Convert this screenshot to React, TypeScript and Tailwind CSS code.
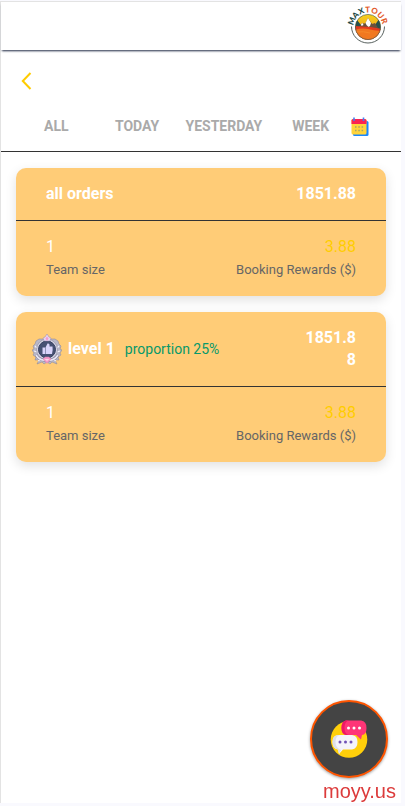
import type { ReactNode } from 'react';

const logoLetters = [
  { letter: 'M', angle: -70, fill: '#1d4843' },
  { letter: 'A', angle: -46, fill: '#1d4843' },
  { letter: 'X', angle: -23, fill: '#1d4843' },
  { letter: 'T', angle: -1, fill: '#e35b2b' },
  { letter: 'O', angle: 22, fill: '#e35b2b' },
  { letter: 'U', angle: 47, fill: '#e35b2b' },
  { letter: 'R', angle: 70, fill: '#e35b2b' },
];

function Logo() {
  return (
    <svg viewBox="0 1 40 40" className="h-10 w-10 overflow-visible" role="img" aria-label="MAXTOUR">
      <defs>
        <clipPath id="disc">
          <circle cx="20" cy="22" r="12.6" />
        </clipPath>
        <linearGradient id="sun" x1="0" y1="0" x2="0" y2="1">
          <stop offset="0" stopColor="#f6d21c" />
          <stop offset="1" stopColor="#f08a1d" />
        </linearGradient>
      </defs>
      <g clipPath="url(#disc)">
        <rect x="7" y="9" width="26" height="26" fill="url(#sun)" />
        <path d="M6 22 V14 L9 15 L13 20 L18 18 L22 18 L27 20 L31 14 L34 15 V25 H6Z" fill="#27504b" />
        <path d="M11 22 L14 18 L17 19 L20 13 L24 19 L27 18 L30 23Z" fill="#69503d" />
        <path d="M17.500 18 L20 13 L23 18 L22 21 L20.500 22 L18.500 20Z M13 19 L14.500 18 L15.500 20 L13.500 21Z" fill="#fff" />
        <path d="M6 21 L14 21.500 L23 22 L34 24 V36 H6Z" fill="#e33a1e" />
        <path d="M6 25 Q14 22.500 20 24 T34 26 V36 H6Z" fill="#f17820" />
        <path d="M8 27 Q16 26 22 28" stroke="#f5892a" fill="none" strokeWidth="1" />
      </g>
      <circle cx="20" cy="22" r="12.600" fill="none" stroke="#40534e" strokeWidth=".6" />
      <path d="M3.500 21.500 A16.500 16.500 0 1 0 36.500 21.500" fill="none" stroke="#59625f" strokeWidth="1" />
      {logoLetters.map(({ letter, angle, fill }) => (
        <text
          key={letter}
          x="20"
          y="7.500"
          transform={`rotate(${angle} 20 22)`}
          textAnchor="middle"
          fontFamily="Lato, Roboto, sans-serif"
          fontSize="8"
          fontWeight="900"
          fill={fill}
        >
          {letter}
        </text>
      ))}
    </svg>
  );
}

function CalendarIcon() {
  return (
    <svg viewBox="0 0 18 20" className="h-5 w-[18px]" aria-hidden="true">
      <rect x="2" y="4" width="15.5" height="15" rx="1.5" fill="#1687ff" />
      <rect x="0.5" y="2" width="15" height="15.5" rx="1.5" fill="#ffd43b" />
      <path d="M.5 7V3.5Q.5 2 2 2H14Q15.500 2 15.500 3.500V7Z" fill="#fa2353" />
      <path d="M3 .5V4M12.500 .5V4" stroke="#477cf0" strokeWidth="1.600" />
      <path d="M4 10H5.500M7.300 10H8.800M10.600 10H12.100M4 13.500H5.500M7.300 13.500H8.800M10.600 13.500H12.100" stroke="#a2a36c" strokeWidth="1.500" />
    </svg>
  );
}

function Medal() {
  return (
    <svg viewBox="0 0 30 31" className="h-[31px] w-[30px] shrink-0" aria-hidden="true">
      <path d="M7 5L4 7L3 10L1 12L2 15L0 16L2 19L1 21L4 23L3 26L7 26L5 30L10 28L12 30L15 28L18 30L20 28L25 30L23 26L27 26L26 23L29 21L28 19L30 16L28 15L29 12L27 10L26 7L23 5Z" fill="#b9b8c8" stroke="#86839a" strokeWidth=".5" />
      <path d="M3 12L5 14M2 17L5 18M4 22L7 22M27 12L25 14M28 17L25 18M26 22L23 22M6 27L10 25M24 27L20 25" stroke="#f3f2fb" strokeWidth="1.300" />
      <circle cx="15" cy="15.500" r="10.500" fill="#d5d4e4" stroke="#8b899f" strokeWidth=".6" />
      <circle cx="15" cy="15.500" r="8.500" fill="#465173" stroke="#363f60" />
      <path d="M10.500 13.500H13V20H10.500Z M13.500 13.500L15.500 9.500Q18 9 17.500 12.500H20.500Q21 15 20 20H13.500Z" fill="#d9d4fa" />
      <path d="M4 21Q8 27 14 26M26 21Q22 27 16 26" fill="none" stroke="#77758c" strokeWidth="2.600" />
      <path d="M4 21Q8 27 14 26M26 21Q22 27 16 26" fill="none" stroke="#e8e6f6" strokeWidth="1.800" />
      <path d="M15 0L17 3L19 4L18 7H12L11 4L13 3Z" fill="#e6d5f1" stroke="#9688ad" strokeWidth=".5" />
      <path d="M15 2.500L16.500 4.500L15 7L13.500 4.500Z" fill="#f49bcf" />
      <path d="M11 25L13 23H17L19 25L15 29.500Z" fill="#f59ac8" stroke="#d981b3" strokeWidth=".5" />
      <path d="M12.500 25H17.500L15 27Z" fill="#fbd5ea" />
    </svg>
  );
}

function ChatIcon() {
  return (
    <svg viewBox="0 0 38 40" className="h-10 w-[38px]" aria-hidden="true">
      <circle cx="19" cy="20.500" r="18.300" fill="#ffcf0a" />
      <path d="M16 1.500H31Q36.500 2 36.500 9Q36.500 15.500 32 16L31 20.500L26 16H16Q11.500 15 11.500 9Q11.500 2 16 1.500Z" fill="#ff3577" />
      <path d="M16 1.500Q11.500 2 11.500 9Q11.500 15 16 16H19Q14.500 15 14.500 9Q14.500 2 19 1.500Z" fill="#ef1766" />
      <path d="M8 16H22Q27.500 16.500 27.500 23Q27.500 29.500 22 30.500H13L9 35L8 30.500Q2.500 29.500 2.500 23Q2.500 16.500 8 16Z" fill="#f5f4fa" />
      <path d="M8 16Q2.500 16.500 2.500 23Q2.500 29.500 8 30.500L9 35L11 31Q5.500 29 5.500 23Q5.500 17 10 16Z" fill="#dedfe8" />
      <g fill="#fff">
        <circle cx="18.500" cy="9" r="1.500" /><circle cx="24" cy="9" r="1.500" /><circle cx="29.500" cy="9" r="1.500" />
      </g>
      <g fill="#7052b5">
        <circle cx="10" cy="23" r="1.500" /><circle cx="15.500" cy="23" r="1.500" /><circle cx="21" cy="23" r="1.500" />
      </g>
    </svg>
  );
}

function OrderCard({ header, size, rewards }: { header: ReactNode; size: string; rewards: string }) {
  return (
    <section className="rounded-[10px] bg-[#ffcc77] shadow-[0_4px_12px_rgba(0,0,0,0.12)]">
      <div className="flex items-center justify-between border-b border-[#333333] py-[15px] pr-[30px] text-base leading-[22px] font-bold text-white">
        {header}
      </div>
      <dl className="flex justify-between px-[30px] pt-[15px] pb-[14px]">
        <div className="flex flex-col-reverse">
          <dt className="text-[13px] leading-6 text-[#666666]">Team size</dt>
          <dd className="text-base leading-[22px] text-white">{size}</dd>
        </div>
        <div className="flex flex-col-reverse text-right">
          <dt className="text-[13px] leading-6 text-[#666666]">Booking Rewards ($)</dt>
          <dd className="text-base leading-[22px] text-[#ffcc00]">{rewards}</dd>
        </div>
      </dl>
    </section>
  );
}

const periods = ['ALL', 'TODAY', 'YESTERDAY', 'WEEK'];

export default function App() {
  return (
    <div className="flex min-h-screen flex-col bg-[#f9f9fe] pt-px pr-1 pb-[3px] font-[Roboto,sans-serif]">
      <div className="flex grow flex-col border-t border-l border-[#e3e3e3] bg-white">
        <header className="flex h-12 items-center justify-end pr-[13px] shadow-[0_2px_2px_-1px_#1f2a44]">
          <Logo />
        </header>

        <div className="flex flex-col border-b border-[#333333]">
          <div className="flex h-[62px] items-center px-5">
            <button type="button" aria-label="Back">
              <svg viewBox="0 0 11 18" className="h-[18px] w-[11px]" fill="none" stroke="#ffcc00" strokeWidth="2">
                <path d="M9.500 1L1.800 9L9.500 17" />
              </svg>
            </button>
          </div>
          <nav className="flex h-[39px] items-start pr-8 pl-[15px]">
            {periods.map((period) => (
              <button key={period} type="button" className="flex-1 px-2 text-center text-sm leading-7 font-bold text-[#aaaaaa]">
                {period}
              </button>
            ))}
            <button type="button" aria-label="Choose date" className="pt-[5px]">
              <CalendarIcon />
            </button>
          </nav>
        </div>

        <main className="flex flex-col gap-4 px-[15px] py-4">
          <OrderCard
            size="1"
            rewards="3.88"
            header={
              <>
                <h2 className="pl-[30px]">all orders</h2>
                <span>1851.88</span>
              </>
            }
          />
          <OrderCard
            size="1"
            rewards="3.88"
            header={
              <>
                <div className="flex items-center pl-4">
                  <Medal />
                  <h2 className="ml-1.5">level 1</h2>
                  <span className="ml-2.5 text-sm leading-[22px] font-normal text-[#07996b]">proportion 25%</span>
                </div>
                <span className="w-14 text-right break-all">1851.88</span>
              </>
            }
          />
        </main>
      </div>

      <div className="fixed right-[9px] bottom-0 flex flex-col items-end pb-0.5">
        <button
          type="button"
          aria-label="Chat"
          className="mr-2 flex h-[78px] w-[78px] items-center justify-center rounded-full border-2 border-[#ff5500] bg-[#444444] shadow-[0_1px_3px_rgba(0,0,0,0.4)]"
        >
          <ChatIcon />
        </button>
        <a href="https://moyy.us" className="font-['Liberation_Sans',sans-serif] text-xl leading-[26px] text-[#dc3b3b]">
          moyy.us
        </a>
      </div>
    </div>
  );
}
